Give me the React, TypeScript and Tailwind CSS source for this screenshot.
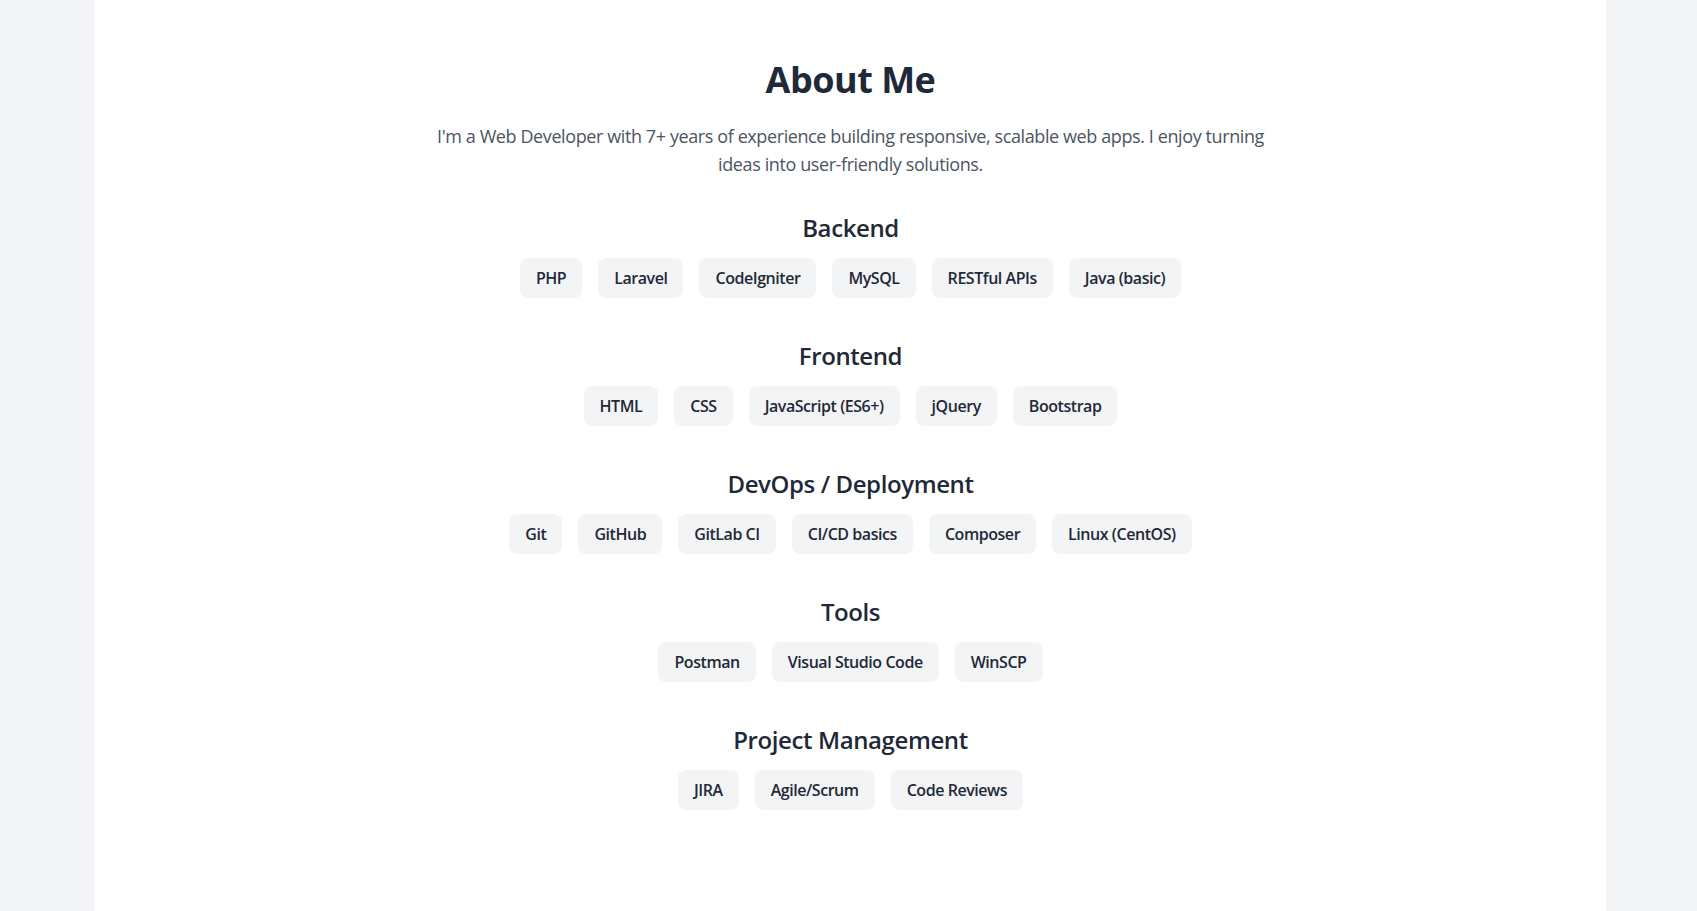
import React from "react";

const sections: { title: string; items: string[] }[] = [
  { title: "Backend", items: ["PHP", "Laravel", "CodeIgniter", "MySQL", "RESTful APIs", "Java (basic)"] },
  { title: "Frontend", items: ["HTML", "CSS", "JavaScript (ES6+)", "jQuery", "Bootstrap"] },
  { title: "DevOps / Deployment", items: ["Git", "GitHub", "GitLab CI", "CI/CD basics", "Composer", "Linux (CentOS)"] },
  { title: "Tools", items: ["Postman", "Visual Studio Code", "WinSCP"] },
  { title: "Project Management", items: ["JIRA", "Agile/Scrum", "Code Reviews"] },
];

export default function App() {
  return (
    <div
      className="min-h-screen bg-[#f3f4f6] flex justify-center"
      style={{ fontFamily: '"Open Sans", "Noto Sans", sans-serif' }}
    >
      <section className="w-[1511px] ml-[4px] min-h-screen bg-white pt-[60px] pb-16 text-center">
        <h1 className="text-4xl font-bold text-[#1f2937] mb-[22px] tracking-[-0.5px]">About Me</h1>
        <p className="mx-auto max-w-[864px] text-lg leading-7 text-[#4b5563] mb-8 tracking-[-0.4px]">
          I'm a Web Developer with 7+ years of experience building responsive, scalable web apps. I enjoy turning ideas
          into user-friendly solutions.
        </p>
        <div className="flex flex-col gap-10">
          {sections.map((s) => (
            <div key={s.title}>
              <h2 className="text-2xl font-semibold text-[#1f2937] pt-[2px] mb-[14px] tracking-[-0.4px]">{s.title}</h2>
              <div className="flex flex-wrap justify-center gap-4">
                {s.items.map((it) => (
                  <span
                    key={it}
                    className="bg-[#f3f4f6] text-[#1f2937] px-4 py-2 rounded-lg text-base font-semibold tracking-[-0.45px]"
                  >
                    {it}
                  </span>
                ))}
              </div>
            </div>
          ))}
        </div>
      </section>
    </div>
  );
}
